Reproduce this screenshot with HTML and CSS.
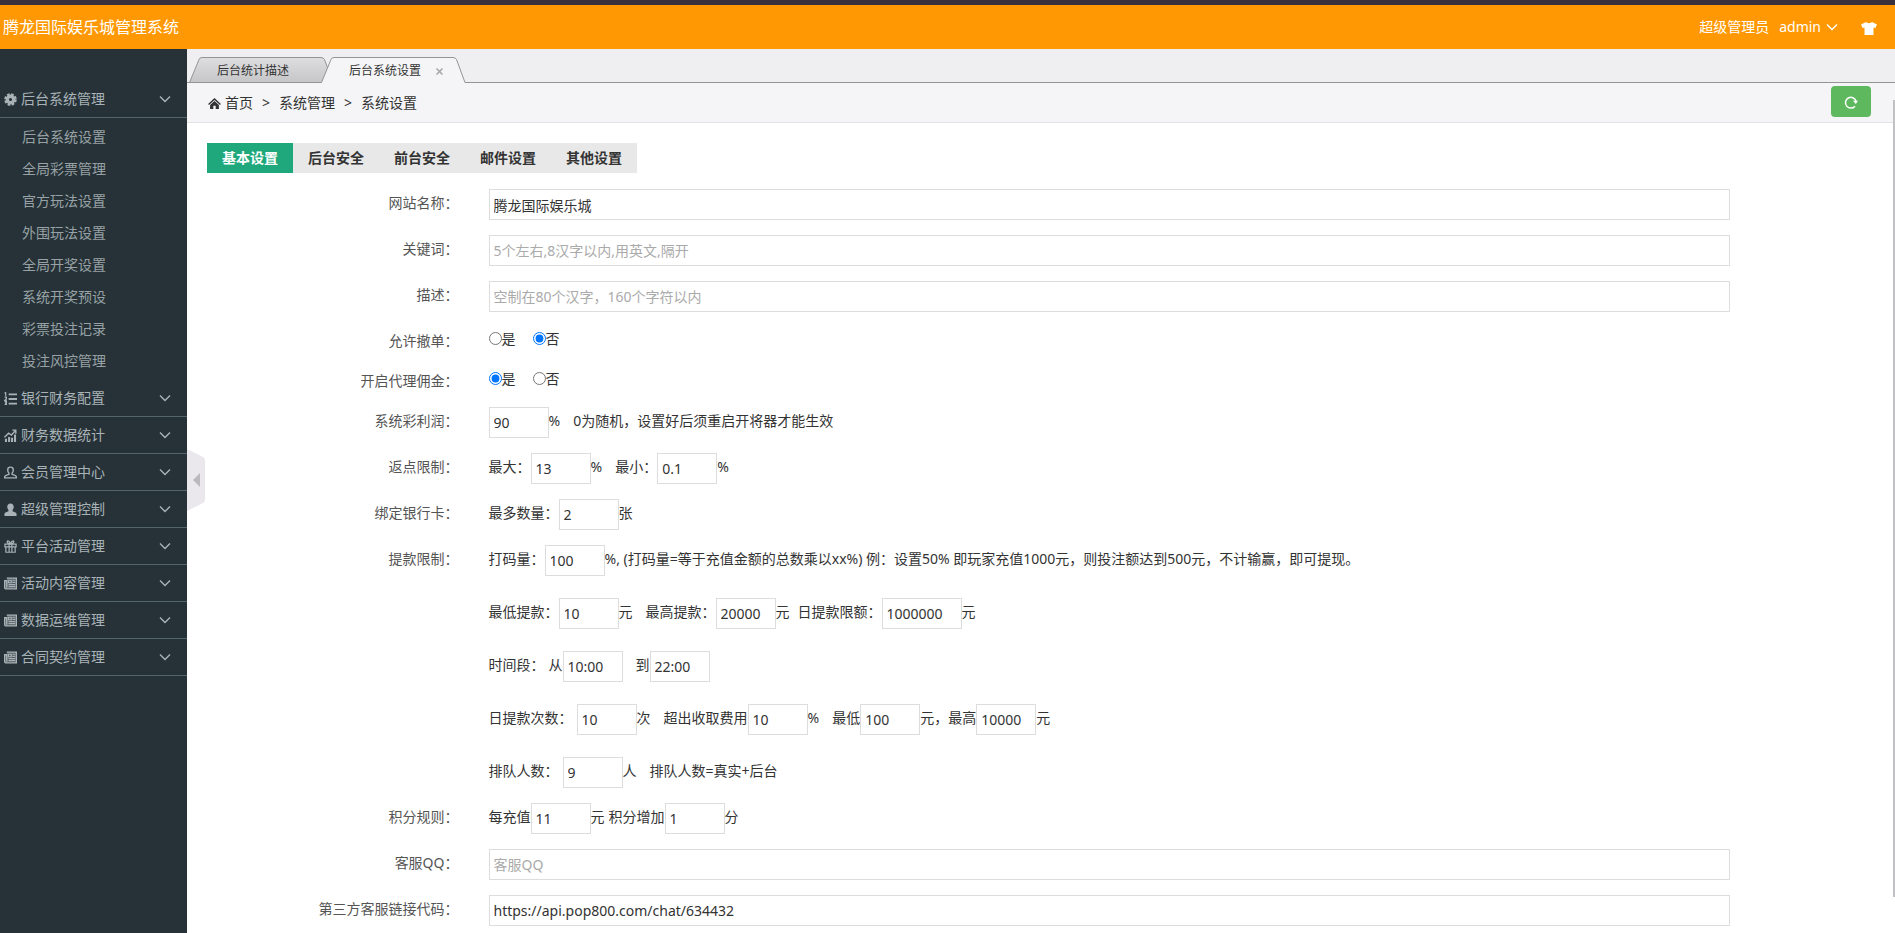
FILE: index.html
```html
<!DOCTYPE html>
<html lang="zh-CN">
<head>
  <meta charset="UTF-8" />
  <meta name="viewport" content="width=device-width, initial-scale=1.0"/>
  <title>腾龙国际娱乐城管理系统</title>
  <link rel="stylesheet" href="styles.css">
</head>
<body>

<svg class="defs" width="0" height="0">
  <symbol id="i-down" viewBox="0 0 12 8"><path d="M1 1.5l5 5 5-5" fill="none" stroke="currentColor" stroke-width="1.4"/></symbol>
  <symbol id="i-gear" viewBox="0 0 14 14">
    <circle cx="7" cy="7" r="5.6" fill="none" stroke="currentColor" stroke-width="2.4" stroke-dasharray="2.8 1.6"/>
    <circle cx="7" cy="7" r="3.5" fill="none" stroke="currentColor" stroke-width="3.6"/>
  </symbol>
  <symbol id="i-list" viewBox="0 0 14 14"><path d="M5 2.5h9M5 7.5h9M5 12.5h9" stroke="currentColor" stroke-width="2"/><path d="M.6 1.4L1.8.6v3.6M.6 5.6h2v1.6L.8 9h2.2M.6 10.4h2v3.1h-2M1 12h1.6" fill="none" stroke="currentColor" stroke-width="1.3"/></symbol>
  <symbol id="i-chart" viewBox="0 0 14 14"><path d="M1 10.5h2.2V14H1zM4.4 8.5h2.2V14H4.4zM7.6 9.5h2.2V14H7.6zM10.8 6H13v8h-2.2z" fill="currentColor"/><path d="M.5 9l4.5-4.5 3 2L12.5 1.5M9 1.2h3.7V5" fill="none" stroke="currentColor" stroke-width="1.5"/></symbol>
  <symbol id="i-user-o" viewBox="0 0 14 14"><path d="M7 1.2c1.8 0 3 1.1 3 3 0 1.6-.6 2.6-1.300 3.500v1.300c1.800.6 4 1.100 4.600 2.300v1.500H.7v-1.500C1.300 10.100 3.500 9.600 5.300 9V7.700C4.600 6.800 4 5.800 4 4.200c0-1.900 1.200-3 3-3z" fill="none" stroke="currentColor" stroke-width="1.5"/></symbol>
  <symbol id="i-user" viewBox="0 0 14 14"><path d="M7 .5c2.200 0 3.500 1.500 3.500 3.600 0 1.500-.6 2.600-1.300 3.500v1.200c1.800.6 3.600 1.200 4.300 2.400V14H.5v-2.800c.7-1.200 2.500-1.800 4.300-2.400V7.600C4.100 6.700 3.500 5.600 3.500 4.100 3.500 2 4.800.5 7 .5z" fill="currentColor"/></symbol>
  <symbol id="i-gift" viewBox="0 0 14 14"><path d="M1 4.500h12v3H1zM2 7.500h10v5.700H2zM5.500 4.500v8.700M8.500 4.500v8.700M6.500 4C3.500 4 2.500 1.200 4.300 1 5.800 1 7 4 7 4s1.200-3 2.700-3C11.500 1.200 10.500 4 7.500 4" fill="none" stroke="currentColor" stroke-width="1.3"/></symbol>
  <symbol id="i-news" viewBox="0 0 14 14"><path d="M3 1.200h10.300v11.600H2.200c-1 0-1.500-.6-1.500-1.500V4H3v7.500" fill="currentColor" fill-opacity=".35" stroke="currentColor" stroke-width="1.5"/><path d="M4.800 3.500h3v2.700h-3zM9 3.500h3M9 5.700h3M4.800 8.200h7.200M4.800 10.400h7.200" fill="none" stroke="currentColor" stroke-width="1.3"/></symbol>
  <symbol id="i-home" viewBox="0 0 14 12"><path d="M7 0l7 6.500-1 1L7 2.200 1 7.500l-1-1z" fill="currentColor"/><path d="M7 3.400l4.800 4.200V12H8.300V8.500H5.700V12H2.200V7.600z" fill="currentColor"/></symbol>
  <symbol id="i-shirt" viewBox="0 0 16 13"><path d="M5 0c1 1.500 5 1.500 6 0l5 2.500-1.600 3.600L12.500 5.500V13h-9V5.500l-1.900.6L0 2.500z" fill="currentColor"/></symbol>
  <symbol id="i-refresh" viewBox="0 0 14 14"><path d="M11 11.200A5.400 5.400 0 1 1 12 6" fill="none" stroke="currentColor" stroke-width="1.500"/><path d="M9 5.800h5L11.800 9z" fill="currentColor"/></symbol>
</svg>

<header class="navbar">
  <a class="logo" href="#">腾龙国际娱乐城管理系统</a>
  <nav class="userbar">
    <span>超级管理员</span>
    <a class="account" href="#">admin <svg width="12" height="8"><use href="#i-down"/></svg></a>
    <a class="skin" href="#" title="换肤"><svg width="16" height="13"><use href="#i-shirt"/></svg></a>
  </nav>
</header>

<div class="main">
  <aside class="sidebar">
    <button class="menu-title"><svg width="13" height="13"><use href="#i-gear"/></svg><span>后台系统管理</span><svg class="arrow" width="12" height="8"><use href="#i-down"/></svg></button>
    <ul class="submenu">
      <li><a href="#">后台系统设置</a></li>
      <li><a href="#">全局彩票管理</a></li>
      <li><a href="#">官方玩法设置</a></li>
      <li><a href="#">外围玩法设置</a></li>
      <li><a href="#">全局开奖设置</a></li>
      <li><a href="#">系统开奖预设</a></li>
      <li><a href="#">彩票投注记录</a></li>
      <li><a href="#">投注风控管理</a></li>
    </ul>
    <button class="menu-title"><svg width="13" height="13"><use href="#i-list"/></svg><span>银行财务配置</span><svg class="arrow" width="12" height="8"><use href="#i-down"/></svg></button>
    <button class="menu-title"><svg width="13" height="13"><use href="#i-chart"/></svg><span>财务数据统计</span><svg class="arrow" width="12" height="8"><use href="#i-down"/></svg></button>
    <button class="menu-title"><svg width="13" height="13"><use href="#i-user-o"/></svg><span>会员管理中心</span><svg class="arrow" width="12" height="8"><use href="#i-down"/></svg></button>
    <button class="menu-title"><svg width="13" height="13"><use href="#i-user"/></svg><span>超级管理控制</span><svg class="arrow" width="12" height="8"><use href="#i-down"/></svg></button>
    <button class="menu-title"><svg width="13" height="13"><use href="#i-gift"/></svg><span>平台活动管理</span><svg class="arrow" width="12" height="8"><use href="#i-down"/></svg></button>
    <button class="menu-title"><svg width="13" height="13"><use href="#i-news"/></svg><span>活动内容管理</span><svg class="arrow" width="12" height="8"><use href="#i-down"/></svg></button>
    <button class="menu-title"><svg width="13" height="13"><use href="#i-news"/></svg><span>数据运维管理</span><svg class="arrow" width="12" height="8"><use href="#i-down"/></svg></button>
    <button class="menu-title"><svg width="13" height="13"><use href="#i-news"/></svg><span>合同契约管理</span><svg class="arrow" width="12" height="8"><use href="#i-down"/></svg></button>
    <button class="collapse" title="收起菜单">
      <svg width="18" height="62"><path d="M0 0l16 8q2 1 2 3v40q0 2-2 3L0 62z" fill="#eae8ec"/><path d="M13 24v14l-7-7z" fill="#b9b8bb"/></svg>
    </button>
  </aside>

  <section class="content">
    <div class="tabs">
      <a class="tab" href="#">
        <svg width="146" height="26">
          <linearGradient id="tabBg" x1="0" y1="0" x2="0" y2="1"><stop offset="0" stop-color="#dedee0"/><stop offset="1" stop-color="#c6c6c8"/></linearGradient>
          <path d="M.5 25.500L10 2.500Q10.700.5 13 .5H132Q134.500.5 135.500 2.500L144 25.500z" fill="url(#tabBg)" stroke="#949497"/>
        </svg>
        <span>后台统计描述</span>
      </a>
      <a class="tab active" href="#">
        <svg width="146" height="26">
          <path d="M.5 25.500L10 2.500Q10.700.5 13 .5H132Q134.500.5 135.500 2.500L144 25.500V26H.5z" fill="#f5f5f7"/>
          <path d="M.5 25.500L10 2.500Q10.700.5 13 .5H132Q134.500.5 135.500 2.500L144 25.500" fill="none" stroke="#949497"/>
        </svg>
        <span>后台系统设置</span>
        <svg class="close" width="7" height="7"><path d="M.5.5l6 6M6.500.5l-6 6" stroke="#a5a5a8" stroke-width="1.500"/></svg>
      </a>
    </div>

    <nav class="breadcrumb">
      <svg width="13" height="11"><use href="#i-home"/></svg>
      <a href="#">首页</a><span class="sep">&gt;</span><span>系统管理</span><span class="sep">&gt;</span><span>系统设置</span>
      <button class="refresh" title="刷新"><svg width="14" height="14"><use href="#i-refresh"/></svg></button>
    </nav>

    <div class="page">
      <form>
        <div class="tabbar">
          <button type="button" class="current">基本设置</button>
          <button type="button">后台安全</button>
          <button type="button">前台安全</button>
          <button type="button">邮件设置</button>
          <button type="button">其他设置</button>
        </div>

        <div class="row">
          <label class="name" for="webname">网站名称：</label>
          <div class="controls"><input class="full" type="text" id="webname" value="腾龙国际娱乐城"></div>
        </div>
        <div class="row">
          <label class="name" for="keywords">关键词：</label>
          <div class="controls"><input class="full" type="text" id="keywords" placeholder="5个左右,8汉字以内,用英文,隔开"></div>
        </div>
        <div class="row">
          <label class="name" for="description">描述：</label>
          <div class="controls"><input class="full" type="text" id="description" placeholder="空制在80个汉字，160个字符以内"></div>
        </div>
        <div class="row">
          <span class="name">允许撤单：</span>
          <div class="controls radios">
            <label><input type="radio" name="cancel">是</label>
            <label><input type="radio" name="cancel" checked>否</label>
          </div>
        </div>
        <div class="row">
          <span class="name">开启代理佣金：</span>
          <div class="controls radios">
            <label><input type="radio" name="agent" checked>是</label>
            <label><input type="radio" name="agent">否</label>
          </div>
        </div>
        <div class="row">
          <label class="name" for="profit">系统彩利润：</label>
          <div class="controls">
            <div class="line"><input type="text" id="profit" value="90"><span>%</span><span class="gap">0为随机，设置好后须重启开将器才能生效</span></div>
          </div>
        </div>
        <div class="row">
          <span class="name">返点限制：</span>
          <div class="controls">
            <div class="line"><label for="maxPoint">最大：</label><input type="text" id="maxPoint" value="13"><span>%</span><label class="gap" for="minPoint">最小：</label><input type="text" id="minPoint" value="0.1"><span>%</span></div>
          </div>
        </div>
        <div class="row">
          <span class="name">绑定银行卡：</span>
          <div class="controls">
            <div class="line"><label for="cardNum">最多数量：</label><input type="text" id="cardNum" value="2"><span>张</span></div>
          </div>
        </div>
        <div class="row">
          <span class="name">提款限制：</span>
          <div class="controls">
            <div class="line"><label for="damaliang">打码量：</label><input type="text" id="damaliang" value="100"><span>%, (打码量=等于充值金额的总数乘以xx%) 例：设置50% 即玩家充值1000元，则投注额达到500元，不计输赢，即可提现。</span></div>
            <div class="line"><label for="minDraw">最低提款：</label><input type="text" id="minDraw" value="10"><span>元</span><label class="gap" for="maxDraw">最高提款：</label><input type="text" id="maxDraw" value="20000"><span>元</span><label class="gap-m" for="dayDraw">日提款限额：</label><input class="wide" type="text" id="dayDraw" value="1000000"><span>元</span></div>
            <div class="line"><span>时间段：</span><label class="gap-s" for="timeFrom">从</label><input type="text" id="timeFrom" value="10:00"><label class="gap" for="timeTo">到</label><input type="text" id="timeTo" value="22:00"></div>
            <div class="line"><label for="drawTimes">日提款次数：</label><input class="gap-s" type="text" id="drawTimes" value="10"><span>次</span><label class="gap" for="fee">超出收取费用</label><input type="text" id="fee" value="10"><span>%</span><label class="gap" for="feeMin">最低</label><input type="text" id="feeMin" value="100"><span>元，</span><label for="feeMax">最高</label><input type="text" id="feeMax" value="10000"><span>元</span></div>
            <div class="line"><label for="queue">排队人数：</label><input class="gap-s" type="text" id="queue" value="9"><span>人</span><span class="gap">排队人数=真实+后台</span></div>
          </div>
        </div>
        <div class="row">
          <span class="name">积分规则：</span>
          <div class="controls">
            <div class="line"><label for="recharge">每充值</label><input type="text" id="recharge" value="11"><span>元</span><label class="gap-s" for="points">积分增加</label><input type="text" id="points" value="1"><span>分</span></div>
          </div>
        </div>
        <div class="row">
          <label class="name" for="kefuqq">客服QQ：</label>
          <div class="controls"><input class="full" type="text" id="kefuqq" placeholder="客服QQ"></div>
        </div>
        <div class="row">
          <label class="name" for="kefuUrl">第三方客服链接代码：</label>
          <div class="controls"><input class="full" type="text" id="kefuUrl" value="https://api.pop800.com/chat/634432"></div>
        </div>
      </form>
    </div>
    <div class="scrollbar"></div>
  </section>
</div>

</body>
</html>
```
FILE: styles.css
```css
* { box-sizing: border-box; }
body {
  margin: 0;
  height: 100vh;
  display: flex;
  flex-direction: column;
  overflow: hidden;
  font: 14px/22px "Noto Sans", "Noto Sans CJK SC", sans-serif;
  color: #333;
  background: #fff;
}
a { color: inherit; text-decoration: none; }
button, input { font: inherit; color: inherit; }
button {
  border: none;
  background: none;
  padding: 0;
  cursor: pointer;
}
svg { display: block; flex: none; }
.defs { position: absolute; }

/* header */
.navbar {
  flex: none;
  height: 49px;
  border-top: 5px solid #38303c;
  background: #ff9802;
  color: #fff;
  display: flex;
  align-items: center;
  justify-content: space-between;
  padding: 0 18px 0 3px;
}
.logo { font-size: 16px; }
.userbar {
  display: flex;
  align-items: center;
}
.account {
  display: flex;
  align-items: center;
  gap: 5px;
  margin: 0 23px 0 10px;
}
.skin { padding-top: 2px; }

.main {
  flex: 1;
  min-height: 0;
  display: flex;
}

/* sidebar */
.sidebar {
  position: relative;
  flex: none;
  width: 187px;
  padding-top: 32px;
  background: #263237;
  color: #a9b3b7;
}
.menu-title {
  display: flex;
  align-items: center;
  width: 100%;
  height: 37px;
  padding: 0 16px 0 4px;
  border-bottom: 1px solid #54666b;
}
.menu-title span { margin-left: 4px; }
.menu-title .arrow { margin-left: auto; }
.submenu {
  list-style: none;
  margin: 0;
  padding: 3px 0;
}
.submenu a {
  display: block;
  padding-left: 22px;
  line-height: 32px;
  color: #98a2a6;
}
.collapse {
  position: absolute;
  left: 100%;
  top: 400px;
  z-index: 2;
}

/* content */
.content {
  position: relative;
  flex: 1;
  min-width: 0;
}
.tabs {
  display: flex;
  align-items: flex-end;
  height: 34px;
  padding-left: 2px;
  background: #efeef0;
  box-shadow: inset 0 -1px #949497;
}
.tab {
  position: relative;
  display: flex;
  align-items: center;
  gap: 15px;
  width: 132px;
  height: 26px;
  padding: 2px 0 0 28px;
  font-size: 12px;
  white-space: nowrap;
}
.tab > svg:first-child {
  position: absolute;
  left: 0;
  top: 0;
}
.tab span, .close { position: relative; }
.active { z-index: 1; }

.breadcrumb {
  display: flex;
  align-items: center;
  height: 40px;
  padding: 0 24px 0 21px;
  background: #f5f5f7;
  border-bottom: 1px solid #e3e3e5;
}
.breadcrumb > svg { margin-top: 2px; }
.breadcrumb a { margin-left: 4px; }
.sep { margin: 0 9px; }
.refresh {
  display: flex;
  align-items: center;
  justify-content: center;
  width: 40px;
  height: 31px;
  margin-left: auto;
  margin-bottom: 2px;
  border-radius: 4px;
  background: #5eb95e;
  color: #fff;
}

.page { padding: 20px 23px 20px 20px; }
.tabbar {
  display: flex;
  width: fit-content;
  margin-bottom: 16px;
  background: #e8e8e8;
}
.tabbar button {
  padding: 0 15px;
  line-height: 30px;
  font-weight: bold;
}
.tabbar .current {
  background: #1ea87b;
  color: #fff;
}

/* form */
.row {
  display: flex;
  margin: 0 -14px 15px -16px;
}
.name {
  width: 16.6667%;
  padding: 3px 15px 0;
  text-align: right;
  color: #555;
}
.controls {
  width: 75%;
  padding: 0 15px;
}
input[type="text"] {
  width: 60px;
  height: 31px;
  padding: 0 4px;
  border: 1px solid #ddd;
  background: #fff;
}
input.full { display: block; width: 100%; }
input.wide { width: 80px; }
input::placeholder { color: #aaa; }
.radios {
  display: flex;
  gap: 17px;
  padding-bottom: 2px;
}
.radios label {
  display: flex;
  align-items: center;
}
.radios input { margin: 0; }
.line {
  display: flex;
  align-items: center;
  white-space: nowrap;
}
.line span, .line label { padding-bottom: 3px; }
.line + .line { margin-top: 22px; }
.line .gap { margin-left: 13px; }
.line .gap-m { margin-left: 8px; }
.line .gap-s { margin-left: 4px; }

.scrollbar {
  position: absolute;
  top: 51px;
  right: 0;
  bottom: 36px;
  width: 2px;
  background: #c1c1c3;
}
```
